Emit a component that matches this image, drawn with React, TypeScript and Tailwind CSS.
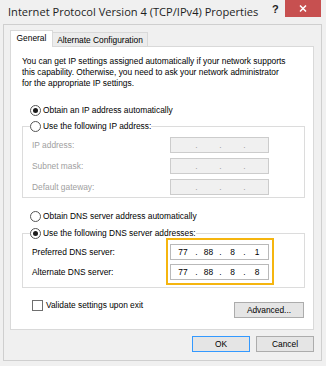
import React from "react";

const body = { fontFamily: '"Liberation Sans", Arial, sans-serif' };

function Radio({ checked }: { checked?: boolean }) {
  return (
    <span className="flex h-[11px] w-[11px] shrink-0 items-center justify-center rounded-full border border-[#555555] bg-white">
      {checked ? <span className="h-[5px] w-[5px] rounded-full bg-[#1b1b1b]" /> : null}
    </span>
  );
}

function IpField({ values, disabled }: { values?: string[]; disabled?: boolean }) {
  const v = values ?? ["", "", "", ""];
  return (
    <div
      className={
        disabled
          ? "grid h-[16px] w-[99px] grid-cols-[24px_3px_21px_3px_21px_3px_22px] items-center border border-[#cccccc] bg-[#f0f0f0] text-[8.4px] leading-[14px] text-[#a0a0a0]"
          : "grid h-[16px] w-[99px] grid-cols-[24px_3px_21px_3px_21px_3px_22px] items-center border border-[#b9b9b9] bg-white text-[8.4px] leading-[14px] text-black"
      }
    >
      <span className="text-center">{v[0]}</span>
      <span className="text-center">.</span>
      <span className="text-center">{v[1]}</span>
      <span className="text-center">.</span>
      <span className="text-center">{v[2]}</span>
      <span className="text-center">.</span>
      <span className="text-center">{v[3]}</span>
    </div>
  );
}

export default function App() {
  return (
    <div className="flex h-[366px] w-[326px] flex-col bg-[#f0f0f0] text-black" style={body}>
      {/* Title bar */}
      <div className="flex h-[24px] shrink-0 items-start">
        <span
          className="ml-[8px] self-center text-[11.1px] leading-[16px] text-[#1e1e1e]"
          style={{ fontFamily: '"Open Sans", "Noto Sans", sans-serif' }}
        >
          Internet Protocol Version 4 (TCP/IPv4) Properties
        </span>
        <span className="ml-auto mt-[3px] w-[6px] text-center text-[11px] font-bold leading-[12px] text-[#222222]">?</span>
        <span className="ml-[7px] mr-[5px] flex h-[17px] w-[36px] items-center justify-center bg-[#c75050]">
          <svg width="8" height="7" viewBox="0 0 8 7">
            <path d="M1 0.5 L7 6.5 M7 0.5 L1 6.5" stroke="#ffffff" strokeWidth="1.5" />
          </svg>
        </span>
      </div>

      {/* Client area */}
      <div className="mb-[5px] ml-[3px] mr-[4px] flex flex-1 flex-col border border-[#cfcfcf] pl-[6px] pr-[7px] pt-[5px]">
        {/* Tabs */}
        <div className="flex h-[16px] items-end text-[8.4px]">
          <div className="relative z-10 -mb-px flex h-[17px] w-[43px] items-center justify-center border-x border-t border-[#d9d9d9] bg-white pb-[1px]">
            General
          </div>
          <div className="-ml-px flex h-[14px] w-[96px] items-center justify-center border-x border-t border-[#d9d9d9] bg-[#ececec] pt-[1px]">
            Alternate Configuration
          </div>
        </div>

        {/* Panel */}
        <div className="flex h-[284px] flex-col border border-[#d9d9d9] bg-white pl-[11px] pt-[9px] text-[8.4px]">
          <p className="leading-[11px]">
            You can get IP settings assigned automatically if your network supports
            <br />
            this capability. Otherwise, you need to ask your network administrator
            <br />
            for the appropriate IP settings.
          </p>

          <div className="mt-[15px] flex h-[13px] items-center gap-[2px] pl-[8px] leading-[13px]">
            <Radio checked />
            <span>Obtain an IP address automatically</span>
          </div>

          <fieldset className="mt-[3px] w-[283px] border border-[#dcdcdc] pb-[2px]">
            <legend className="ml-[7px] flex h-[13px] items-center gap-[2px] leading-[13px]">
              <Radio />
              <span>Use the following IP address:</span>
            </legend>
            <div className="flex flex-col gap-[5px] pl-[9px] pt-[4px] text-[#a0a0a0]">
              <div className="flex h-[16px] items-center">
                <span className="w-[138px]">IP address:</span>
                <IpField disabled />
              </div>
              <div className="flex h-[16px] items-center">
                <span className="w-[138px]">Subnet mask:</span>
                <IpField disabled />
              </div>
              <div className="flex h-[16px] items-center">
                <span className="w-[138px]">Default gateway:</span>
                <IpField disabled />
              </div>
            </div>
          </fieldset>

          <div className="mt-[12px] flex h-[13px] items-center gap-[2px] pl-[8px] leading-[13px]">
            <Radio />
            <span>Obtain DNS server address automatically</span>
          </div>

          <fieldset className="mt-[4px] w-[283px] border border-[#dcdcdc] pb-[7px]">
            <legend className="ml-[7px] flex h-[13px] items-center gap-[2px] leading-[13px]">
              <Radio checked />
              <span>Use the following DNS server addresses:</span>
            </legend>
            <div className="flex pl-[9px] pt-[4px]">
              <div className="flex w-[138px] flex-col gap-[4px]">
                <span className="flex h-[16px] items-center">Preferred DNS server:</span>
                <span className="flex h-[16px] items-center">Alternate DNS server:</span>
              </div>
              <div className="relative flex flex-col gap-[4px]">
                <IpField values={["77", "88", "8", "1"]} />
                <IpField values={["77", "88", "8", "8"]} />
                <span className="pointer-events-none absolute -bottom-[5px] -left-[4px] -right-[5px] -top-[6px] border-2 border-[#f5b50f]" />
              </div>
            </div>
          </fieldset>

          <div className="mt-[12px] flex w-[282px] items-start">
            <div className="ml-[10px] flex items-center gap-[3px]">
              <span className="h-[11px] w-[11px] border border-[#6f6f6f] bg-white" />
              <span className="leading-[11px]">Validate settings upon exit</span>
            </div>
            <button className="ml-auto mt-[2px] flex h-[16px] w-[70px] items-center justify-center border border-[#acacac] bg-[#e5e5e5] leading-[14px]">
              Advanced...
            </button>
          </div>
        </div>

        {/* Buttons */}
        <div className="mt-[6px] flex justify-end gap-[6px] text-[8.4px]">
          <button className="flex h-[16px] w-[58px] items-center justify-center border border-[#3399ff] bg-[#e5e5e5] leading-[14px]">
            OK
          </button>
          <button className="flex h-[16px] w-[58px] items-center justify-center border border-[#acacac] bg-[#e5e5e5] leading-[14px]">
            Cancel
          </button>
        </div>
      </div>
    </div>
  );
}
